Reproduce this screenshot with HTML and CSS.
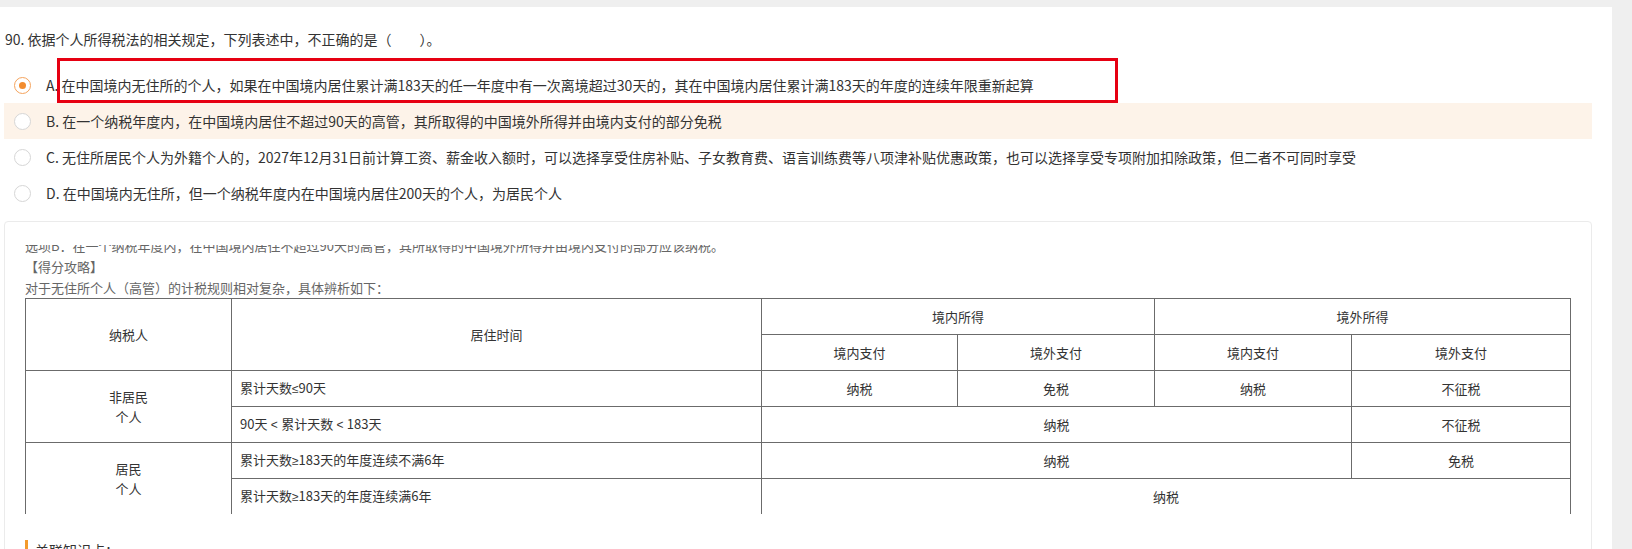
FILE: index.html
```html
<!DOCTYPE html>
<html lang="zh-CN">
<head>
    <meta charset="UTF-8">
    <title>单选题</title>
    <link rel="stylesheet" href="styles.css">
</head>
<body>
    <div class="page">
        <p class="stem">90. 依据个人所得税法的相关规定，下列表述中，不正确的是（　　）。</p>

        <ul class="options">
            <li class="option checked">
                <span class="radio"></span>
                <span class="opt-text">A. 在中国境内无住所的个人，如果在中国境内居住累计满183天的任一年度中有一次离境超过30天的，其在中国境内居住累计满183天的年度的连续年限重新起算</span>
                <div class="mark"></div>
            </li>
            <li class="option hovered">
                <span class="radio"></span>
                <span class="opt-text">B. 在一个纳税年度内，在中国境内居住不超过90天的高管，其所取得的中国境外所得并由境内支付的部分免税</span>
            </li>
            <li class="option">
                <span class="radio"></span>
                <span class="opt-text">C. 无住所居民个人为外籍个人的，2027年12月31日前计算工资、薪金收入额时，可以选择享受住房补贴、子女教育费、语言训练费等八项津补贴优惠政策，也可以选择享受专项附加扣除政策，但二者不可同时享受</span>
            </li>
            <li class="option">
                <span class="radio"></span>
                <span class="opt-text">D. 在中国境内无住所，但一个纳税年度内在中国境内居住200天的个人，为居民个人</span>
            </li>
        </ul>

        <div class="analysis">
            <div class="analysis-scroll">
                <div class="analysis-body">
                    <p class="muted">选项B：在一个纳税年度内，在中国境内居住不超过90天的高管，其所取得的中国境外所得并由境内支付的部分应该纳税。</p>
                    <p class="muted">【得分攻略】</p>
                    <p class="muted">对于无住所个人（高管）的计税规则相对复杂，具体辨析如下：</p>
                    <table class="rules">
                        <colgroup>
                            <col style="width: 206px">
                            <col style="width: 530px">
                            <col style="width: 196px">
                            <col style="width: 197px">
                            <col style="width: 197px">
                            <col style="width: 219px">
                        </colgroup>
                        <tr>
                            <td rowspan="2">纳税人</td>
                            <td rowspan="2">居住时间</td>
                            <td colspan="2">境内所得</td>
                            <td colspan="2">境外所得</td>
                        </tr>
                        <tr>
                            <td>境内支付</td>
                            <td>境外支付</td>
                            <td>境内支付</td>
                            <td>境外支付</td>
                        </tr>
                        <tr>
                            <td rowspan="2" class="two-line">非居民<br>个人</td>
                            <td class="left">累计天数<span class="sym">≤</span>90天</td>
                            <td>纳税</td>
                            <td>免税</td>
                            <td>纳税</td>
                            <td>不征税</td>
                        </tr>
                        <tr>
                            <td class="left">90天<span class="sym"> &lt; </span>累计天数<span class="sym"> &lt; </span>183天</td>
                            <td colspan="3">纳税</td>
                            <td>不征税</td>
                        </tr>
                        <tr>
                            <td rowspan="2" class="two-line">居民<br>个人</td>
                            <td class="left">累计天数<span class="sym">≥</span>183天的年度连续不满6年</td>
                            <td colspan="3">纳税</td>
                            <td>免税</td>
                        </tr>
                        <tr>
                            <td class="left">累计天数<span class="sym">≥</span>183天的年度连续满6年</td>
                            <td colspan="4">纳税</td>
                        </tr>
                    </table>
                </div>
            </div>
            <h4 class="related">关联知识点：</h4>
        </div>
    </div>
</body>
</html>
```

FILE: styles.css
```css
* {
    margin: 0;
    padding: 0;
    box-sizing: border-box;
}

body {
    background-color: #efefef;
    font-family: "Noto Sans CJK SC", "Noto Sans", sans-serif;
    color: #333;
}

.page {
    width: 1612px;
    height: 542px;
    margin-top: 7px;
    padding: 22px 20px 0 4px;
    background-color: #fff;
    overflow: hidden;
}

.stem {
    font-size: 14px;
    line-height: 20px;
    padding-left: 1px;
}

.options {
    list-style: none;
    margin-top: 18px;
}

.option {
    position: relative;
    display: flex;
    align-items: center;
    height: 36px;
    padding-left: 10px;
    font-size: 14px;
    white-space: nowrap;
}

.option.hovered {
    background-color: #fdf3e9;
}

.radio {
    flex-shrink: 0;
    display: flex;
    align-items: center;
    justify-content: center;
    width: 17px;
    height: 17px;
    margin-right: 15px;
    border: 1px solid #d6d6d6;
    border-radius: 50%;
    background-color: #fff;
}

.option.checked .radio {
    border-color: #f5a35c;
}

.option.checked .radio::after {
    content: '';
    width: 7px;
    height: 7px;
    border-radius: 50%;
    background-color: #f28c2f;
}

/* red annotation frame drawn over option A */
.mark {
    position: absolute;
    left: 53px;
    top: -9px;
    width: 1061px;
    height: 45px;
    border: 3px solid #e60012;
}

.analysis {
    margin-top: 10px;
    padding: 23px 20px 0;
    border: 1px solid #ebebeb;
    border-radius: 4px;
    height: 400px;
}

/* content is scrolled a little, so the first line is cut */
.analysis-scroll {
    height: 269px;
    overflow: hidden;
}

.analysis-body {
    margin-top: -10px;
}

.muted {
    font-size: 13px;
    line-height: 21px;
    color: #666;
    white-space: nowrap;
}

.rules {
    width: 1545px;
    table-layout: fixed;
    border-collapse: collapse;
    font-size: 13px;
    color: #333;
}

.rules tr {
    height: 36px;
}

.rules td {
    border: 1px solid #6b6b6b;
    text-align: center;
    vertical-align: middle;
    line-height: 20px;
}

.rules td.left {
    text-align: left;
    padding-left: 8px;
}

.sym {
    font-family: "Liberation Sans", sans-serif;
    font-size: 12px;
    white-space: pre;
}

.related {
    margin-top: 26px;
    padding-left: 7px;
    border-left: 3px solid #f39a2b;
    font-size: 14px;
    line-height: 20px;
    font-weight: normal;
    color: #333;
}
```
